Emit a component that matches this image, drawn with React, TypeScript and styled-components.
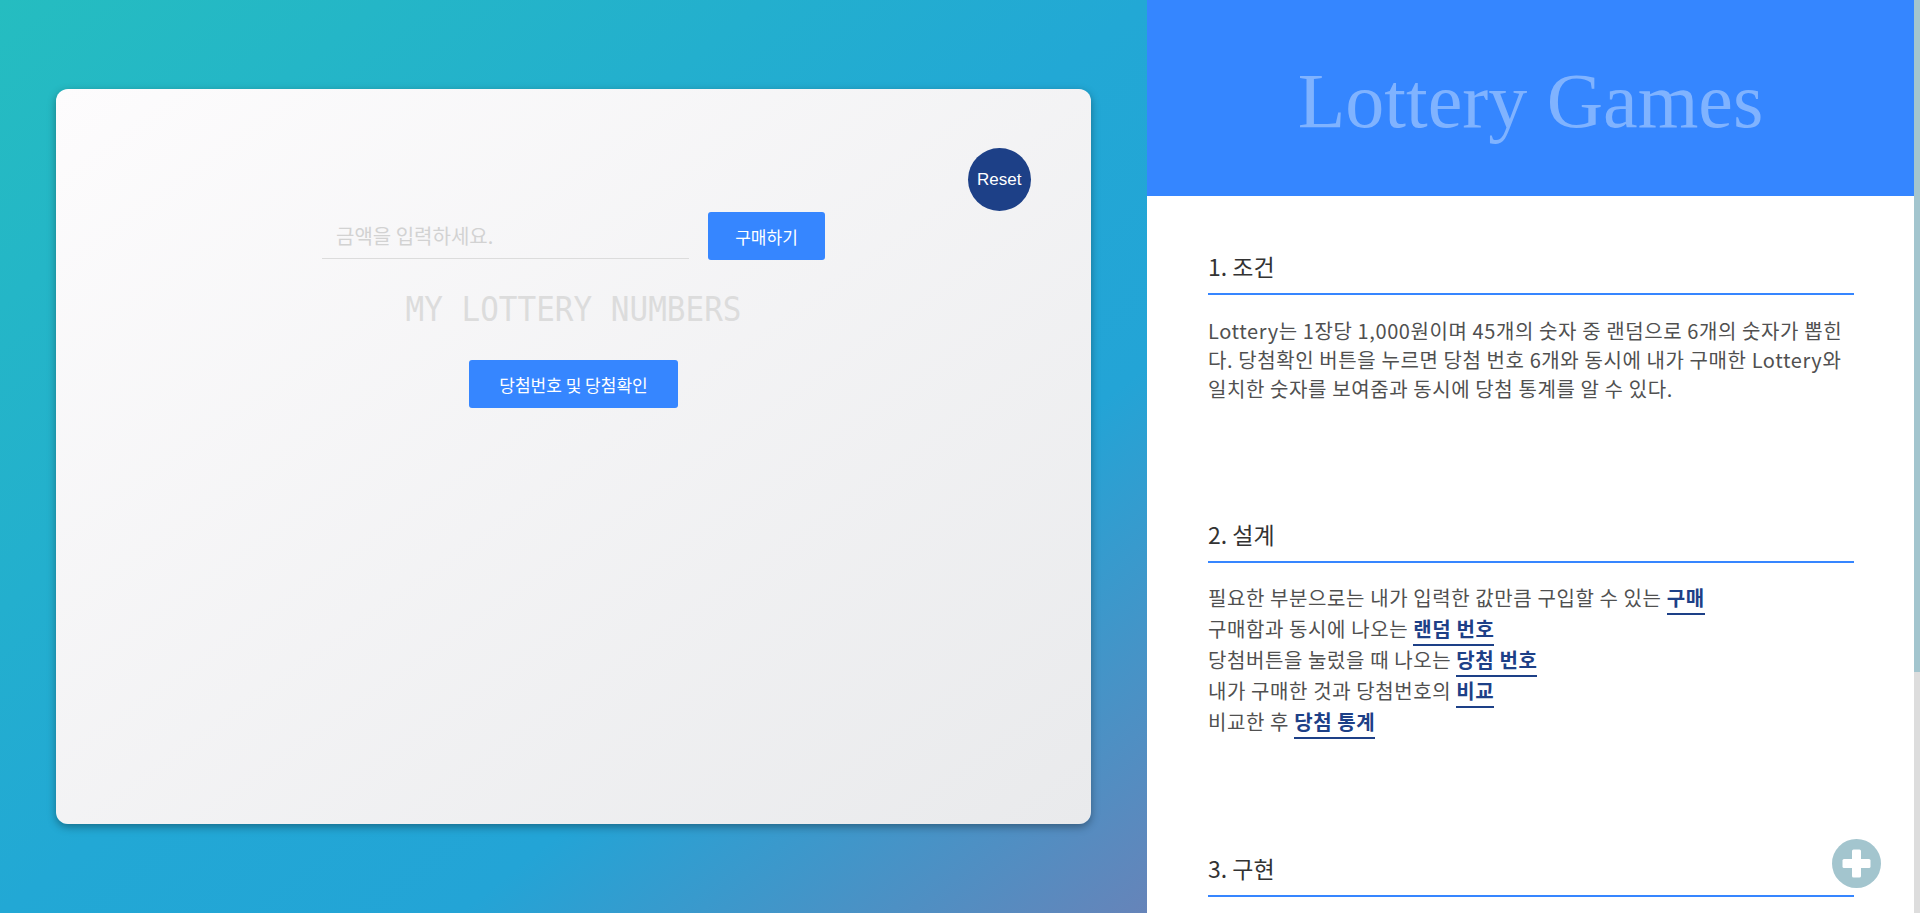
import React from 'react';
import styled, { createGlobalStyle } from 'styled-components';

const GlobalStyle = createGlobalStyle`
  html,
  body {
    margin: 0;
    height: 100%;
    overflow: hidden;
  }

  body {
    font-family: 'Noto Sans CJK KR', 'Noto Sans', sans-serif;
  }

  * {
    box-sizing: border-box;
  }
`;

const Page = styled.div`
  display: flex;
  height: 100vh;
`;

const LeftPane = styled.section`
  flex: 1;
  display: flex;
  align-items: center;
  justify-content: center;
  background: linear-gradient(
    to bottom right,
    #25bdc0 0%,
    #22a8d5 50%,
    #23a4d6 70%,
    #6684b9 100%
  );
`;

const Card = styled.div`
  position: relative;
  width: 90.2%;
  height: 80.4%;
  padding-top: 123px;
  display: flex;
  flex-direction: column;
  align-items: center;
  border-radius: 12px;
  background: linear-gradient(to bottom right, #fdfcfd, #e9eaec);
  box-shadow: 0 3px 8px rgba(0, 0, 0, 0.35);
`;

const ResetButton = styled.button`
  position: absolute;
  top: 59px;
  right: 60px;
  width: 63px;
  height: 63px;
  padding: 0;
  border: none;
  border-radius: 50%;
  background: #1d4087;
  color: #fff;
  font-family: 'Liberation Sans', Arial, sans-serif;
  font-size: 17px;
  cursor: pointer;
`;

const PurchaseRow = styled.div`
  display: flex;
  align-items: flex-start;
  gap: 19px;
`;

const AmountInput = styled.input`
  width: 367px;
  height: 47px;
  padding: 0 14px;
  border: none;
  border-bottom: 1px solid #dcdcdc;
  background: transparent;
  font-family: 'Noto Sans CJK KR', sans-serif;
  font-size: 20px;
  color: #555;
  outline: none;

  &::placeholder {
    color: #d2d2d2;
  }
`;

const PrimaryButton = styled.button<{ $width: number }>`
  width: ${({ $width }) => $width}px;
  height: 48px;
  padding: 0;
  border: none;
  border-radius: 3px;
  background: #3686ff;
  color: #fff;
  font-family: 'Noto Sans CJK KR', sans-serif;
  font-size: 17px;
  cursor: pointer;
`;

const NumbersTitle = styled.h2`
  margin: 31px 0 33px;
  font-family: 'DejaVu Sans Mono', 'Liberation Mono', monospace;
  font-size: 31px;
  font-weight: 400;
  line-height: 36px;
  color: #dcdcdc;
  transform: scaleY(1.1);
`;

const RightPane = styled.aside`
  width: 773px;
  height: 100vh;
  display: flex;
  background: #fff;
`;

const ScrollArea = styled.div`
  flex: 1;
  height: 100%;
  overflow-y: auto;
  scrollbar-width: none;

  &::-webkit-scrollbar {
    display: none;
  }
`;

const ScrollTrack = styled.div`
  width: 6px;
  height: 100%;
  background: #dddddd;
`;

const ScrollThumb = styled.div<{ $size: number }>`
  height: ${({ $size }) => $size}px;
  background: #a3c5ce;
`;

const Header = styled.header`
  height: 196px;
  padding-top: 5px;
  display: flex;
  align-items: center;
  justify-content: center;
  background: #3586ff;
`;

const HeaderTitle = styled.h1`
  margin: 0;
  font-family: 'Liberation Serif', 'Times New Roman', serif;
  font-size: 78px;
  font-weight: 400;
  line-height: 1;
  color: #80b3ff;
`;

const Content = styled.div`
  padding: 54px 60px 340px 61px;
`;

const Section = styled.section`
  margin-bottom: 115px;

  &:last-child {
    margin-bottom: 0;
  }
`;

const SectionTitle = styled.h3`
  margin: 0;
  padding-bottom: 10px;
  border-bottom: 2px solid #3686ff;
  font-size: 23px;
  font-weight: 400;
  line-height: 33px;
  color: #333;
`;

const Paragraph = styled.p`
  margin: 21px 0 0;
  font-size: 20px;
  line-height: 29px;
  letter-spacing: 0.6px;
  color: #505050;
`;

const LineList = styled.div`
  margin-top: 19px;
  font-size: 20px;
  line-height: 31px;
  letter-spacing: 0.6px;
  color: #505050;
`;

const Highlight = styled.strong`
  padding-bottom: 1px;
  border-bottom: 2px solid #1d4087;
  font-weight: 700;
  color: #1d4087;
`;

const AddButton = styled.button`
  position: fixed;
  right: 39px;
  bottom: 25px;
  width: 49px;
  height: 49px;
  padding: 0;
  border: none;
  background: none;
  cursor: pointer;

  & > svg {
    display: block;
  }
`;

const designLines: { text: string; strong: string }[] = [
  { text: '필요한 부분으로는 내가 입력한 값만큼 구입할 수 있는 ', strong: '구매' },
  { text: '구매함과 동시에 나오는 ', strong: '랜덤 번호' },
  { text: '당첨버튼을 눌렀을 때 나오는 ', strong: '당첨 번호' },
  { text: '내가 구매한 것과 당첨번호의 ', strong: '비교' },
  { text: '비교한 후 ', strong: '당첨 통계' },
];

const App = () => (
  <>
    <GlobalStyle />
    <Page>
      <LeftPane>
        <Card>
          <ResetButton type="button">Reset</ResetButton>
          <PurchaseRow>
            <AmountInput type="number" placeholder="금액을 입력하세요." />
            <PrimaryButton type="button" $width={117}>
              구매하기
            </PrimaryButton>
          </PurchaseRow>
          <NumbersTitle>MY LOTTERY NUMBERS</NumbersTitle>
          <PrimaryButton type="button" $width={209}>
            당첨번호 및 당첨확인
          </PrimaryButton>
        </Card>
      </LeftPane>
      <RightPane>
        <ScrollArea>
          <Header>
            <HeaderTitle>Lottery Games</HeaderTitle>
          </Header>
          <Content>
            <Section>
              <SectionTitle>1. 조건</SectionTitle>
              <Paragraph>
                Lottery는 1장당 1,000원이며 45개의 숫자 중 랜덤으로 6개의 숫자가 뽑힌다. 당첨확인 버튼을
                누르면 당첨 번호 6개와 동시에 내가 구매한 Lottery와 일치한 숫자를 보여줌과 동시에 당첨
                통계를 알 수 있다.
              </Paragraph>
            </Section>
            <Section>
              <SectionTitle>2. 설계</SectionTitle>
              <LineList>
                {designLines.map((line) => (
                  <div key={line.strong}>
                    {line.text}
                    <Highlight>{line.strong}</Highlight>
                  </div>
                ))}
              </LineList>
            </Section>
            <Section>
              <SectionTitle>3. 구현</SectionTitle>
            </Section>
          </Content>
        </ScrollArea>
        <ScrollTrack>
          <ScrollThumb $size={672} />
        </ScrollTrack>
      </RightPane>
      <AddButton type="button" aria-label="add">
        <svg width="49" height="49" viewBox="0 0 49 49">
          <circle cx="24.5" cy="24.5" r="24.5" fill="#a3c5ce" />
          <rect x="10.5" y="20" width="28" height="9" rx="1.5" fill="#fff" />
          <rect x="20" y="10.5" width="9" height="28" rx="1.5" fill="#fff" />
        </svg>
      </AddButton>
    </Page>
  </>
);

export default App;
